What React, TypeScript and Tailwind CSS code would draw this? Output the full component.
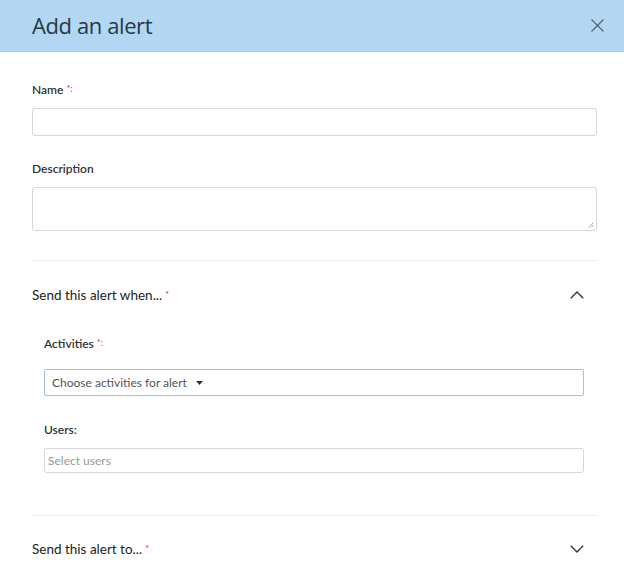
const font = { fontFamily: '"Segoe UI", Lato, "Noto Sans", sans-serif' };
const titleFont = { fontFamily: '"Segoe UI", "Open Sans", "Noto Sans", sans-serif' };

function Required({ colon = true }: { colon?: boolean }) {
  return (
    <span className="text-[#e0245e] text-[9px] ml-[3px] font-normal relative top-[-2px]">
      *{colon ? ':' : ''}
    </span>
  );
}

function Chevron({ up }: { up?: boolean }) {
  return (
    <svg width="14" height="8" viewBox="0 0 14 8" fill="none">
      <path
        d={up ? 'M0.8 7.3 L7 1 L13.2 7.3' : 'M0.8 0.7 L7 7 L13.2 0.7'}
        stroke="#333"
        strokeWidth="1.3"
      />
    </svg>
  );
}

export default function App() {
  return (
    <div className="w-[624px] h-[583px] bg-white overflow-hidden" style={font}>
      <div className="h-[52px] bg-[#b3d7f3] border-b border-[#a6cbe8] flex items-center justify-between pl-8 pr-[19px]">
        <h1 className="text-[22px] text-[#273848] tracking-[-0.4px]" style={titleFont}>
          Add an alert
        </h1>
        <svg width="13" height="13" viewBox="0 0 13 13" className="mr-[1px]">
          <path d="M0.5 0.5 L12.5 12.5 M12.5 0.5 L0.5 12.5" stroke="#4f6377" strokeWidth="1.2" />
        </svg>
      </div>

      <div className="pl-8 pr-[27px] pt-[30px]">
        <label className="block h-4 leading-4 text-[12px] text-[#333] font-semibold">
          Name<Required />
        </label>
        <div className="mt-[10px] h-[28px] rounded-[3px] border border-[#d6d6d6]" />

        <label className="block mt-[25px] h-4 leading-4 text-[12px] text-[#333] font-semibold">
          Description
        </label>
        <div className="mt-[10px] h-[44px] rounded-[3px] border border-[#d6d6d6] relative">
          <svg className="absolute right-[2px] bottom-[2px]" width="6" height="6" viewBox="0 0 6 6">
            <path d="M5.5 0.5 L0.5 5.5 M5.5 3 L3 5.5" stroke="#999" strokeWidth="0.8" />
          </svg>
        </div>

        <div className="mt-[29px] border-t border-[#eeeeee]" />

        <div className="mt-[24px] h-5 flex items-center justify-between pr-[13px]">
          <span className="text-[13.5px] text-[#222]">
            Send this alert when...<Required colon={false} />
          </span>
          <Chevron up />
        </div>

        <div className="ml-3 mr-[13px]">
          <label className="block mt-[31px] h-4 leading-4 text-[12px] text-[#333] font-semibold">
            Activities<Required />
          </label>
          <div className="mt-[17px] h-[27px] border border-[#9cc3e6] rounded-[2px] flex items-center px-[7px] text-[12px] text-[#555]">
            Choose activities for alert
            <svg className="ml-[9px]" width="7" height="4" viewBox="0 0 7 4">
              <path d="M0 0 H7 L3.5 4 Z" fill="#333" />
            </svg>
          </div>

          <label className="block mt-[26px] h-4 leading-4 text-[12px] text-[#333] font-semibold">
            Users:
          </label>
          <div className="mt-[10px] h-[25px] border border-[#d6d6d6] rounded-[3px] flex items-center px-[3px] text-[12px] text-[#9a9a9a]">
            Select users
          </div>
        </div>

        <div className="mt-[42px] border-t border-[#eeeeee]" />

        <div className="mt-[23px] h-5 flex items-center justify-between pr-[13px]">
          <span className="text-[13.5px] text-[#222]">
            Send this alert to...<Required colon={false} />
          </span>
          <Chevron />
        </div>
      </div>
    </div>
  );
}
